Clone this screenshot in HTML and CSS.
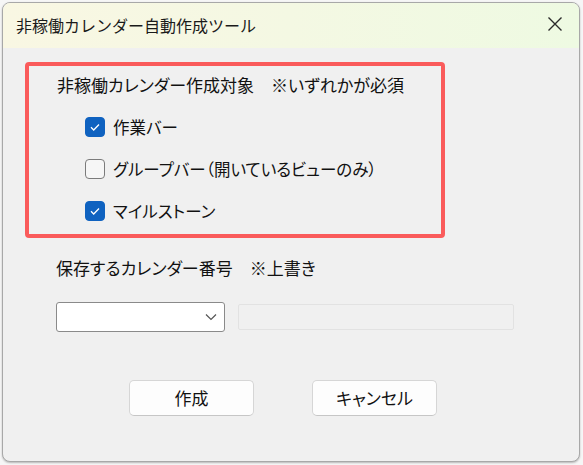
FILE: index.html
```html
<!DOCTYPE html>
<html lang="ja">
<head>
<meta charset="utf-8">
<link rel="stylesheet" href="styles.css">
</head>
<body>
<div class="window">
  <div class="titlebar">
    <span class="title">非稼働カレンダー自動作成ツール</span>
    <svg class="close" width="16" height="16" viewBox="0 0 16 16"><path d="M1.5 1.5 L14.5 14.5 M14.5 1.5 L1.5 14.5" stroke="#2b2b2b" stroke-width="1.4" fill="none"/></svg>
  </div>
  <div class="content">
    <div class="targets">
      <div class="heading">非稼働カレンダー作成対象　※いずれかが必須</div>
      <label class="row"><span class="cb checked"><svg width="20" height="20" viewBox="0 0 20 20"><path d="M6 10.3 L8.7 13 L14 7.5" stroke="#fff" stroke-width="1.3" fill="none"/></svg></span><span>作業バー</span></label>
      <label class="row"><span class="cb"></span><span>グループバー（開いているビューのみ）</span></label>
      <label class="row"><span class="cb checked"><svg width="20" height="20" viewBox="0 0 20 20"><path d="M6 10.3 L8.7 13 L14 7.5" stroke="#fff" stroke-width="1.3" fill="none"/></svg></span><span>マイルストーン</span></label>
    </div>
    <div class="save-label">保存するカレンダー番号　※上書き</div>
    <div class="inputs">
      <div class="combo"><svg class="chev" width="12" height="8" viewBox="0 0 12 8"><path d="M1 1.5 L6 6.5 L11 1.5" stroke="#555" stroke-width="1.2" fill="none"/></svg></div>
      <div class="textbox"></div>
    </div>
    <div class="buttons">
      <button class="btn">作成</button>
      <button class="btn">キャンセル</button>
    </div>
  </div>
</div>
</body>
</html>
```
FILE: styles.css
```css
html, body {
  margin: 0;
  padding: 0;
}
body {
  width: 583px;
  height: 465px;
  background: #f6f6f6;
  font-family: "Noto Sans CJK JP", "Noto Sans", sans-serif;
  color: #111;
  overflow: hidden;
}
.window {
  margin: 2px 0 0 2px;
  width: 578px;
  height: 460px;
  box-sizing: border-box;
  border: 1px solid #a8a8a8;
  border-radius: 8px;
  overflow: hidden;
  background: #f0f0f0;
  box-shadow: 0 1px 2px rgba(0,0,0,0.25);
  display: flex;
  flex-direction: column;
}
.titlebar {
  height: 45px;
  flex: none;
  display: flex;
  align-items: center;
  justify-content: space-between;
  padding: 0 16px 0 13px;
  background: linear-gradient(90deg, #f9f7e3 0%, #f4f8e3 50%, #eefae2 100%);
}
.title {
  font-size: 16px;
  line-height: 20px;
  color: #1a1a1a;
  margin-top: -2px;
}
.close {
  margin-top: -3px;
}
.content {
  display: flex;
  flex-direction: column;
  padding: 14px 0 0 22px;
  font-feature-settings: "palt" 1;
}
.targets {
  width: 420px;
  height: 176px;
  box-sizing: border-box;
  border: 4px solid #fa5b5b;
  border-radius: 4px;
  padding: 9px 0 0 28px;
  display: flex;
  flex-direction: column;
}
.heading {
  font-size: 17px;
  line-height: 20px;
  height: 20px;
  margin-bottom: 11px;
  white-space: nowrap;
}
.row {
  height: 42px;
  display: flex;
  align-items: center;
  gap: 8px;
  padding-left: 28px;
  font-size: 16.5px;
  line-height: 20px;
  white-space: nowrap;
}
.cb {
  width: 20px;
  height: 20px;
  box-sizing: border-box;
  border-radius: 4px;
  border: 1px solid #7b7b7b;
  background: #f6f6f6;
  display: flex;
  align-items: center;
  justify-content: center;
  flex: none;
}
.cb.checked {
  background: #0f62c0;
  border-color: #0f62c0;
}
.cb svg {
  display: block;
  margin: -1px;
}
.save-label {
  margin: 20px 0 0 31px;
  font-size: 17px;
  line-height: 20px;
  white-space: nowrap;
}
.inputs {
  margin: 24px 0 0 31px;
  display: flex;
  align-items: center;
  gap: 13px;
}
.combo {
  width: 169px;
  height: 30px;
  box-sizing: border-box;
  background: #fff;
  border: 1px solid #8a8a8a;
  border-radius: 3px;
  display: flex;
  align-items: center;
  justify-content: flex-end;
  padding-right: 7px;
}
.chev {
  display: block;
}
.textbox {
  width: 276px;
  height: 26px;
  box-sizing: border-box;
  border: 1px solid #e2e2e2;
  border-radius: 2px;
  background: #f0f0f0;
}
.buttons {
  margin: 48px 0 0 104px;
  display: flex;
  gap: 58px;
}
.btn {
  width: 125px;
  height: 36px;
  box-sizing: border-box;
  background: #fdfdfd;
  border: 1px solid #d6d6d6;
  border-bottom-color: #c6c6c6;
  border-radius: 5px;
  font-family: "Noto Sans CJK JP", "Noto Sans", sans-serif;
  font-feature-settings: "palt" 1;
  font-size: 17px;
  line-height: 20px;
  color: #111;
  padding: 0;
}
```
